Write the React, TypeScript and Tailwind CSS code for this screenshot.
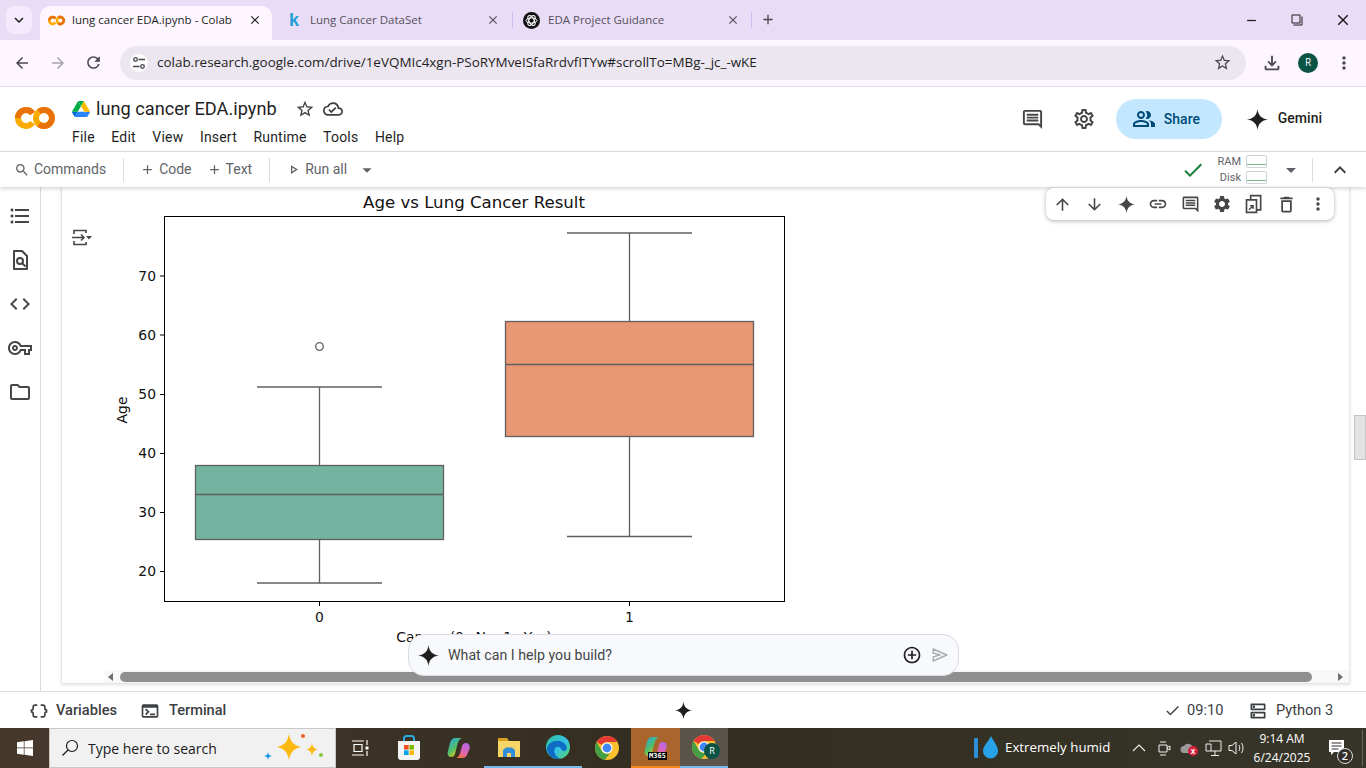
import React from 'react'
import {
  MdAdd, MdAddCircleOutline, MdArrowBack, MdArrowDownward, MdArrowDropDown, MdArrowForward, MdArrowUpward,
  MdCheck, MdClose, MdCode, MdDataObject, MdDeleteOutline, MdExpandLess, MdFilterNone, MdFormatListBulleted,
  MdKeyboardArrowDown, MdLink, MdMoreVert, MdOutlineCloudDone, MdOutlineDns, MdOutlineFileDownload, MdOutlineFolder,
  MdOutlinePeopleAlt, MdOutlinePlayArrow, MdOutlineSettings, MdOutlineTerminal, MdOutlineVpnKey, MdRefresh,
  MdRemove, MdSearch, MdSettings, MdStarBorder,
} from 'react-icons/md'

const SPARK = 'M12 1C12.7 7.6 16.4 11.3 23 12 16.4 12.7 12.7 16.4 12 23 11.3 16.4 7.6 12.7 1 12 7.6 11.3 11.3 7.6 12 1Z'

const MENU = ['File', 'Edit', 'View', 'Insert', 'Runtime', 'Tools', 'Help']

const Spark: React.FC<{ size: number; fill?: string }> = ({ size, fill = '#1f1f1f' }) => (
  <svg width={size} height={size} viewBox="0 0 24 24"><path d={SPARK} fill={fill} /></svg>
)

const CommentIcon: React.FC<{ size: number }> = ({ size }) => (
  <svg width={size} height={size} viewBox="0 0 24 24" fill="currentColor">
    <path d="M20 17.17 18.83 16H4V4h16v13.17zM20 2H4c-1.1 0-2 .9-2 2v12c0 1.1.9 2 2 2h14l4 4V4c0-1.1-.9-2-2-2z" />
    <path d="M6 12h12v2H6zM6 9h12v2H6zM6 6h12v2H6z" />
  </svg>
)

const ColabLogo: React.FC<{ w: number; h: number }> = ({ w, h }) => (
  <svg width={w} height={h} viewBox="0 0 40 24" fill="none" strokeWidth="6">
    <path d="M17.550 7.400A8 8 0 1 0 17.550 16.600" stroke="#f9ab00" />
    <path d="M17.550 7.400A8 8 0 0 0 3 12" stroke="#e8710a" />
    <circle cx="29" cy="12" r="8" stroke="#f9ab00" />
    <path d="M24 5.700A8 8 0 1 1 24 18.300" stroke="#e8710a" />
  </svg>
)

const DriveLogo = () => (
  <svg width="18" height="16" viewBox="0 0 87.3 78">
    <path d="m6.6 66.85 3.85 6.65c.8 1.4 1.95 2.5 3.3 3.3l13.75-23.8h-27.5c0 1.55.4 3.1 1.2 4.5z" fill="#0066da" />
    <path d="m43.65 25-13.75-23.8c-1.35.8-2.5 1.9-3.3 3.3l-25.4 44a9.06 9.06 0 0 0 -1.2 4.5h27.5z" fill="#00ac47" />
    <path d="m73.55 76.8c1.35-.8 2.5-1.9 3.3-3.3l1.6-2.75 7.65-13.25c.8-1.4 1.2-2.95 1.2-4.5h-27.502l5.852 11.5z" fill="#2684fc" />
    <path d="m43.65 25 13.75-23.8c-1.35-.8-2.9-1.2-4.5-1.2h-18.5c-1.6 0-3.15.45-4.5 1.2z" fill="#00ac47" />
    <path d="m59.8 53h-32.3l-13.75 23.8c1.35.8 2.9 1.2 4.5 1.2h50.8c1.6 0 3.15-.45 4.5-1.2z" fill="#2684fc" />
    <path d="m73.4 26.5-12.7-22c-.8-1.4-1.95-2.5-3.3-3.3l-13.75 23.8 16.15 28h27.45c0-1.55-.4-3.1-1.2-4.5z" fill="#ffba00" />
  </svg>
)

const GptIcon = () => (
  <svg width="17" height="17" viewBox="0 0 17 17" fill="none">
    <circle cx="8.5" cy="8.5" r="8.5" fill="#111" />
    <g stroke="#fff" strokeWidth="1">
      <ellipse cx="8.5" cy="8.5" rx="5.5" ry="2.6" />
      <ellipse cx="8.5" cy="8.5" rx="5.5" ry="2.6" transform="rotate(60 8.5 8.5)" />
      <ellipse cx="8.5" cy="8.5" rx="5.5" ry="2.6" transform="rotate(120 8.5 8.5)" />
    </g>
  </svg>
)

const ChromeIcon: React.FC<{ size: number }> = ({ size }) => (
  <svg width={size} height={size} viewBox="0 0 24 24">
    <circle cx="12" cy="12" r="12" fill="#fbc02d" />
    <path d="M12 0A12 12 0 0 1 22.4 6H12a6 6 0 0 0-5.2 3L1.6 6A12 12 0 0 1 12 0Z" fill="#e53935" />
    <path d="M1.6 6 6.8 15A6 6 0 0 0 15 17.2L9.8 23.8A12 12 0 0 1 1.6 6Z" fill="#43a047" />
    <circle cx="12" cy="12" r="5.6" fill="#fff" />
    <circle cx="12" cy="12" r="4.4" fill="#4285f4" />
  </svg>
)

const EdgeIcon = () => (
  <svg width="24" height="24" viewBox="0 0 24 24">
    <defs>
      <linearGradient id="edgeA" x1="0" y1="0" x2="1" y2="1">
        <stop offset="0" stopColor="#2cc3a0" />
        <stop offset="0.55" stopColor="#35c1e6" />
        <stop offset="1" stopColor="#5ad65c" />
      </linearGradient>
    </defs>
    <circle cx="12" cy="12" r="12" fill="url(#edgeA)" />
    <path d="M1 14C2 6 13 3 19 9c3 3 2 7-1 7-3 0-2-3-5-4-4-1-6 3-4 7 1 2 3 4 6 4.600C8 25 2 21 1 14Z" fill="#0f6cc4" />
  </svg>
)

const CopilotIcon: React.FC<{ size: number; id: string }> = ({ size, id }) => (
  <svg width={size} height={size} viewBox="0 0 24 24">
    <defs>
      <linearGradient id={`${id}a`} x1="0" y1="0" x2="0.6" y2="1">
        <stop offset="0" stopColor="#2aa7e8" />
        <stop offset="0.6" stopColor="#4fbf67" />
        <stop offset="1" stopColor="#f2c21b" />
      </linearGradient>
      <linearGradient id={`${id}b`} x1="0.7" y1="0" x2="0.3" y2="1">
        <stop offset="0" stopColor="#b866e8" />
        <stop offset="0.6" stopColor="#e066b0" />
        <stop offset="1" stopColor="#f0743c" />
      </linearGradient>
    </defs>
    <path d="M8 2h7c-3 1-4 4-5 8l-2 8c-.5 2-2 3-4 3-3 0-4-3-3-6l2-8C4 4 5.500 2 8 2Z" fill={`url(#${id}a)`} />
    <path d="M16 22H9c3-1 4-4 5-8l1-4c.5-2 2-3 4-3 3 0 4.500 3 3.500 6l-2.500 6c-.8 2-2.500 3-4.500 3Z" fill={`url(#${id}b)`} />
  </svg>
)

const StoreIcon = () => (
  <svg width="24" height="26" viewBox="0 0 24 26">
    <path d="M7 6V3.500C7 2 8 1 9.500 1h5C16 1 17 2 17 3.500V6" fill="none" stroke="#29a9e0" strokeWidth="2" />
    <path d="M1 6h22v16c0 2-1 3-3 3H4c-2 0-3-1-3-3Z" fill="#f4f4f4" />
    <rect x="7" y="10" width="4.600" height="4.600" fill="#f25022" />
    <rect x="12.400" y="10" width="4.600" height="4.600" fill="#7fba00" />
    <rect x="7" y="15.400" width="4.600" height="4.600" fill="#00a4ef" />
    <rect x="12.400" y="15.400" width="4.600" height="4.600" fill="#ffb900" />
  </svg>
)

const ExplorerIcon = () => (
  <svg width="24" height="24" viewBox="0 0 24 24">
    <path d="M1 3h9l2 3H1Z" fill="#d99e1f" />
    <path d="M1 6h22v16H1Z" fill="#f8d568" />
    <path d="M6 22v-7l3-2.500h6l3 2.500v7h-4v-4h-4v4Z" fill="#2f8fd8" />
  </svg>
)

const Sparkles = () => (
  <svg width="62" height="32" viewBox="0 0 62 32">
    <path d="M26 2c1.500 8 5 11.500 12 13-7 1.500-10.500 5-12 13-1.500-8-5-11.500-12-13 7-1.500 10.500-5 12-13Z" fill="#fdb913" />
    <path d="M49 11c.6 4 2.400 5.800 6 6.500-3.600.7-5.400 2.500-6 6.500-.6-4-2.400-5.800-6-6.500 3.600-.7 5.400-2.500 6-6.500Z" fill="#fdb913" />
    <path d="M5 20c.4 2.600 1.400 3.600 4 4-2.600.4-3.600 1.400-4 4-.4-2.600-1.400-3.600-4-4 2.600-.4 3.600-1.400 4-4Z" fill="#1e9be8" />
    <circle cx="40" cy="4" r="2" fill="#e8622a" />
    <circle cx="58" cy="23" r="2" fill="#8cc63f" />
  </svg>
)

// matplotlib figure, coordinates are screen pixels
const BoxPlot = () => {
  const line = '#5f5f5f'
  const ticks = [
    ['70', 276], ['60', 335], ['50', 394.5], ['40', 453.5], ['30', 512.5], ['20', 571.5],
  ] as const
  return (
    <svg width="700" height="484" viewBox="100 187 700 484" className="block shrink-0 font-['DejaVu_Sans',sans-serif]">
      <text x="474" y="207.500" textAnchor="middle" fontSize="16.600" fill="#111">Age vs Lung Cancer Result</text>
      <rect x="164.500" y="216.500" width="620" height="385" fill="#fff" stroke="#000" strokeWidth="1" />
      {ticks.map(([label, y]) => (
        <g key={label}>
          <line x1="160" x2="164" y1={y} y2={y} stroke="#000" />
          <text x="156" y={y + 4.800} textAnchor="end" fontSize="13.900" fill="#111">{label}</text>
        </g>
      ))}
      <text transform="translate(127 410) rotate(-90)" textAnchor="middle" fontSize="13.900" fill="#111">Age</text>

      <line x1="319.500" x2="319.500" y1="602" y2="606" stroke="#000" />
      <line x1="629.500" x2="629.500" y1="602" y2="606" stroke="#000" />
      <text x="319.500" y="622" textAnchor="middle" fontSize="13.900" fill="#111">0</text>
      <text x="629.500" y="622" textAnchor="middle" fontSize="13.900" fill="#111">1</text>
      <text x="474" y="642" textAnchor="middle" fontSize="13.900" fill="#111">Cancer (0=No, 1=Yes)</text>

      <g stroke={line} strokeWidth="1.300" fill="none">
        <line x1="319.500" x2="319.500" y1="387" y2="466" />
        <line x1="319.500" x2="319.500" y1="539.500" y2="583" />
        <line x1="257" x2="382" y1="387" y2="387" />
        <line x1="257" x2="382" y1="583" y2="583" />
        <rect x="195.500" y="465.500" width="248" height="74" fill="#73b3a0" />
        <line x1="195.500" x2="443.500" y1="494.500" y2="494.500" />
        <circle cx="319.500" cy="346.500" r="3.800" />

        <line x1="629.500" x2="629.500" y1="233" y2="321.500" />
        <line x1="629.500" x2="629.500" y1="436.500" y2="536.500" />
        <line x1="567" x2="692" y1="233" y2="233" />
        <line x1="567" x2="692" y1="536.500" y2="536.500" />
        <rect x="505.500" y="321.500" width="248" height="115" fill="#e99673" />
        <line x1="505.500" x2="753.500" y1="364.500" y2="364.500" />
      </g>
    </svg>
  )
}

const TabStrip = () => (
  <div className="flex h-[40px] shrink-0 items-end bg-[#e9dcf6] pl-[6px] text-[11.500px] text-[#3c3a41]">
    <div className="mb-[6px] flex h-[28px] w-[26px] items-center justify-center rounded-lg bg-[#f3eafb]">
      <MdKeyboardArrowDown size={18} color="#1f1f1f" />
    </div>
    <div className="ml-[8px] flex h-[34px] w-[232px] items-center rounded-t-[10px] bg-[#fdf6fe] pb-[6px] pl-[8px] text-[#1f1f1f]">
      <ColabLogo w={17} h={11} />
      <span className="ml-[7px] w-[160px] whitespace-nowrap">lung cancer EDA.ipynb - Colab</span>
      <MdClose size={14} className="ml-[16px]" />
    </div>
    <div className="flex h-[34px] w-[240px] items-center pb-[6px]">
      <span className="ml-[17px] w-[10px] font-['Liberation_Sans',sans-serif] text-[18px] leading-none font-bold text-[#1f9fd4]">k</span>
      <span className="ml-[11px] w-[176px] whitespace-nowrap text-[#55505c]">Lung Cancer DataSet</span>
      <MdClose size={14} className="text-[#55505c]" />
    </div>
    <div className="mb-[12px] h-[16px] w-px bg-[#cdbdf0]" />
    <div className="flex h-[34px] w-[238px] items-center pb-[6px]">
      <span className="ml-[10px] flex"><GptIcon /></span>
      <span className="ml-[8px] w-[178px] whitespace-nowrap text-[#55505c]">EDA Project Guidance</span>
      <MdClose size={14} className="text-[#55505c]" />
    </div>
    <div className="mb-[12px] h-[16px] w-px bg-[#cdbdf0]" />
    <div className="mb-[12px] ml-[8px] flex h-[18px] w-[16px] items-center justify-center text-[#4a4650]">
      <MdAdd size={17} />
    </div>
    <div className="ml-auto mb-[12px] flex h-[16px] items-center text-[#1f1f1f]">
      <MdRemove size={15} />
      <MdFilterNone size={12} className="ml-[32px] -scale-x-100" />
      <MdClose size={18} className="ml-[31px] mr-[14px]" />
    </div>
  </div>
)

const AddressBar = () => (
  <div className="flex h-[47px] shrink-0 items-center border-b border-[#e7dfec] bg-[#fdf6fe] pb-px text-[#4a4650]">
    <MdArrowBack size={18} className="ml-[13px]" />
    <MdArrowForward size={18} className="ml-[18px] text-[#a8a4ad]" />
    <MdRefresh size={19} className="ml-[17px]" />
    <div className="ml-[17px] flex h-[34px] w-[1126px] items-center rounded-full bg-[#ece6f0]">
      <span className="ml-[10px] flex h-[18px] w-[18px] items-center justify-center rounded-full bg-white">
        <svg width="14" height="14" viewBox="0 0 14 14" fill="none" stroke="currentColor" strokeWidth="1.300">
          <circle cx="3.500" cy="3.500" r="1.800" />
          <path d="M6.500 3.500H13M1 10.500h6.500" />
          <circle cx="10.500" cy="10.500" r="1.800" />
        </svg>
      </span>
      <span className="ml-[9px] whitespace-nowrap text-[13.450px] text-[#1f1f1f]">colab.research.google.com/drive/1eVQMIc4xgn-PSoRYMveISfaRrdvfITYw#scrollTo=MBg-_jc_-wKE</span>
      <MdStarBorder size={19} className="ml-auto mr-[14px]" />
    </div>
    <MdOutlineFileDownload size={22} className="ml-[15px]" />
    <span className="ml-[15px] flex h-[20px] w-[20px] items-center justify-center rounded-full bg-[#0b5345] text-[10px] text-white">R</span>
    <MdMoreVert size={20} className="ml-[16px]" />
  </div>
)

const ColabHeader = () => (
  <div className="flex h-[65px] shrink-0 border-b border-[#dadce0] bg-white">
    <div className="ml-[15px] mt-[19px]"><ColabLogo w={40} h={24} /></div>
    <div className="ml-[17px] flex flex-col">
      <div className="mt-[12px] flex h-[20px] items-center">
        <DriveLogo />
        <span className="ml-[6px] text-[18.200px] leading-none text-[#1f1f1f]">lung cancer EDA.ipynb</span>
        <MdStarBorder size={20} className="ml-[18px] text-[#3c4043]" />
        <MdOutlineCloudDone size={20} className="ml-[8px] text-[#3c4043]" />
      </div>
      <div className="mt-[8px] flex gap-[16.500px] text-[14px] leading-[20px] text-[#1f1f1f]">
        {MENU.map((m) => <span key={m} className="tracking-[0.2px]">{m}</span>)}
      </div>
    </div>
    <div className="ml-auto mt-[12px] flex h-[40px] items-center">
      <span className="text-[#444746]"><CommentIcon size={23} /></span>
      <MdOutlineSettings size={24} className="ml-[28px] text-[#444746]" />
      <div className="ml-[20px] flex h-[40px] w-[106px] items-center rounded-[20px] bg-[#c2e7ff] pl-[16px] text-[#004a77]">
        <MdOutlinePeopleAlt size={24} />
        <span className="ml-[8px] text-[14px] font-medium">Share</span>
      </div>
      <span className="ml-[24px] flex"><Spark size={23} /></span>
      <span className="ml-[9px] mr-[44px] mb-[2px] text-[14px] font-medium text-[#1f1f1f]">Gemini</span>
    </div>
  </div>
)

const NotebookToolbar = () => (
  <div className="relative z-10 flex h-[35px] shrink-0 items-center bg-white text-[14px] text-[#5f6368] shadow-[0_2px_4px_rgba(60,64,67,0.2)]">
    <MdSearch size={16} className="ml-[14px]" />
    <span className="ml-[4px]">Commands</span>
    <div className="ml-[17px] h-[24px] w-px bg-[#dadce0]" />
    <MdAdd size={15} className="ml-[16px]" />
    <span className="ml-[4px]">Code</span>
    <MdAdd size={15} className="ml-[15px]" />
    <span className="ml-[4px]">Text</span>
    <div className="ml-[17px] h-[24px] w-px bg-[#dadce0]" />
    <MdOutlinePlayArrow size={15} className="ml-[16px]" />
    <span className="ml-[4px]">Run all</span>
    <MdArrowDropDown size={22} className="ml-[9px]" />
    <div className="ml-auto flex items-center">
      <MdCheck size={24} className="text-[#188038]" />
      <div className="ml-[12px] grid grid-cols-[auto_21px] items-center gap-x-[5px] gap-y-[3px] text-right text-[11px] leading-[13px]">
        <span>RAM</span>
        <span className="flex h-[13px] items-end rounded-[2px] border border-[#cfd2d6] pb-[2px]"><span className="h-px w-full bg-[#7dbb8c]" /></span>
        <span>Disk</span>
        <span className="flex h-[13px] items-end rounded-[2px] border border-[#cfd2d6] pb-[2px]"><span className="h-px w-full bg-[#7dbb8c]" /></span>
      </div>
      <MdArrowDropDown size={24} className="ml-[12px]" />
      <div className="ml-[9px] h-[24px] w-px bg-[#dadce0]" />
      <MdExpandLess size={24} className="ml-[15px] mr-[14px] text-[#3c4043]" />
    </div>
  </div>
)

const LeftRail = () => (
  <div className="flex w-[41px] shrink-0 flex-col items-center gap-[20px] border-r border-[#dadce0] pt-[17px] pr-px text-[#444746]">
    <MdFormatListBulleted size={24} />
    <svg width="24" height="24" viewBox="0 0 24 24" fill="none" stroke="currentColor" strokeWidth="2">
      <path d="M6 3h8l5 5v13H6Z" strokeLinejoin="round" />
      <circle cx="12" cy="13" r="3" />
      <path d="m14.500 15.500 3 3" />
    </svg>
    <MdCode size={24} />
    <MdOutlineVpnKey size={24} />
    <MdOutlineFolder size={24} />
  </div>
)

const CellToolbar = () => (
  <div className="absolute top-px right-[32px] z-20 flex h-[32px] w-[288px] items-center rounded-lg bg-white text-[#444746] shadow-[0_1px_4px_rgba(60,64,67,0.4)] [&>*]:flex [&>*]:w-[32px] [&>*]:justify-center">
    <span><MdArrowUpward size={19} /></span>
    <span><MdArrowDownward size={19} /></span>
    <span><Spark size={19} fill="#444746" /></span>
    <span><MdLink size={20} /></span>
    <span><CommentIcon size={19} /></span>
    <span><MdSettings size={20} /></span>
    <span>
      <svg width="20" height="20" viewBox="0 0 24 24" fill="none" stroke="currentColor" strokeWidth="2">
        <path d="M8 6V2h12v17h-5M3 7h12v15H3Z" />
        <path d="m6 19 5-5M7 14h4v4" strokeWidth="1.600" />
      </svg>
    </span>
    <span><MdDeleteOutline size={21} /></span>
    <span><MdMoreVert size={20} /></span>
  </div>
)

const GeminiPrompt = () => (
  <div className="absolute top-[447px] left-[408px] z-20 flex h-[42px] w-[551px] items-center rounded-2xl border border-[#dadce0] bg-[#f8f9fd] pl-[8px] text-[14.200px] text-[#444746]">
    <Spark size={23} />
    <span className="ml-[8px] pt-px">What can I help you build?</span>
    <MdAddCircleOutline size={20} className="ml-auto text-[#1f1f1f]" />
    <svg width="18" height="18" viewBox="0 0 24 24" fill="none" stroke="#a8abb0" strokeWidth="2" className="ml-[9px] mr-[9px]">
      <path d="M3 4 21 12 3 20V14.500L12 12 3 9.500Z" strokeLinejoin="round" />
    </svg>
  </div>
)

const MainArea = () => (
  <div className="relative flex h-[504px] shrink-0 bg-white">
    <LeftRail />
    <div className="flex flex-1 pl-[20px]">
      <div className="mb-[7px] flex flex-1 flex-col overflow-hidden border-x border-b border-[#e6e6e6] shadow-[0_1px_3px_rgba(60,64,67,0.15)]">
        <div className="flex min-h-0 flex-1">
          <div className="w-[38px] shrink-0 pt-[41px] pl-[9px] text-[#444746]">
            <svg width="22" height="20" viewBox="0 0 22 20" fill="none" stroke="currentColor" strokeWidth="1.600">
              <path d="M3 6V2.500h12V5M3 13v3.500h12V14" />
              <path d="M1 9.500h12M10 6.500l3 3-3 3" />
              <path d="M15 8h6l-3 3.500Z" fill="currentColor" stroke="none" />
            </svg>
          </div>
          <BoxPlot />
        </div>
        <div className="flex h-[13px] shrink-0 items-center bg-white">
          <div className="ml-[43px] flex h-[13px] flex-1 items-center bg-[#f8f8f8]">
            <span className="ml-[3px] h-0 w-0 border-y-[4px] border-r-[5px] border-y-transparent border-r-[#6e6e6e]" />
            <div className="ml-[7px] h-[10px] w-[1192px] rounded-full bg-[#8f8f8f]" />
            <span className="ml-auto mr-[6px] h-0 w-0 border-y-[4px] border-l-[5px] border-y-transparent border-l-[#6e6e6e]" />
          </div>
        </div>
      </div>
      <div className="w-[16px] shrink-0 pt-[228px] pl-[4px]">
        <div className="h-[45px] w-[12px] border border-[#c4c4c4] bg-[#e3e3e3]" />
      </div>
    </div>
    <CellToolbar />
    <GeminiPrompt />
  </div>
)

const StatusBar = () => (
  <div className="flex h-[37px] shrink-0 items-center border-t border-[#dadce0] bg-white pt-px text-[14.600px] text-[#3c4043]">
    <MdDataObject size={20} className="ml-[29px] shrink-0" />
    <span className="ml-[7px] w-[61px] shrink-0 font-medium whitespace-nowrap">Variables</span>
    <MdOutlineTerminal size={20} className="ml-[23px] shrink-0" />
    <span className="ml-[9px] w-[56px] shrink-0 font-medium whitespace-nowrap">Terminal</span>
    <span className="ml-[449px] flex"><Spark size={19} /></span>
    <MdCheck size={17} className="ml-[471px] shrink-0" />
    <span className="ml-[6px] w-[36px] shrink-0">09:10</span>
    <MdOutlineDns size={20} className="ml-[25px] shrink-0" />
    <span className="ml-[8px] whitespace-nowrap">Python 3</span>
  </div>
)

const Taskbar = () => (
  <div className="flex h-[40px] shrink-0 items-stretch bg-gradient-to-r from-[#47382c] via-[#322d20] to-[#37352a] font-['Open_Sans',sans-serif] text-white [&>*]:shrink-0">
    <div className="flex w-[49px] items-center justify-center">
      <svg width="16" height="16" viewBox="0 0 16 16" fill="#fff">
        <path d="M0 2.300 6.800 1.300V7.500H0ZM7.500 1.200 16 0V7.500H7.500ZM0 8.300H6.800V14.700L0 13.700ZM7.500 8.300H16V16L7.500 14.800Z" />
      </svg>
    </div>
    <div className="flex w-[287px] items-center border border-[#c8c8c8] bg-[#f1f1f1] pl-[11px] text-[#1a1a1a]">
      <svg width="18" height="18" viewBox="0 0 18 18" fill="none" stroke="#1a1a1a" strokeWidth="1.200">
        <circle cx="11" cy="7" r="5.500" />
        <path d="M7 11 1.500 16.500" />
      </svg>
      <span className="ml-[9px] text-[14px]">Type here to search</span>
      <span className="ml-auto mr-[10px] flex"><Sparkles /></span>
    </div>
    <div className="flex w-[48px] items-center justify-center">
      <svg width="18" height="18" viewBox="0 0 18 18" fill="none" stroke="#fff" strokeWidth="1.200">
        <path d="M1 2h12M1 16h12M3 5.500h8v7H3ZM16 1v5M16 12v5" />
        <rect x="14.500" y="7.500" width="3" height="3" fill="#fff" stroke="none" />
      </svg>
    </div>
    <div className="flex w-[50px] items-center justify-center"><StoreIcon /></div>
    <div className="flex w-[50px] items-center justify-center"><CopilotIcon size={24} id="cp" /></div>
    <div className="flex w-[49px] items-center justify-center border-b-2 border-[#76b9ed]"><ExplorerIcon /></div>
    <div className="flex w-[49px] items-center justify-center border-b-2 border-[#76b9ed]"><EdgeIcon /></div>
    <div className="flex w-[49px] items-center justify-center"><ChromeIcon size={24} /></div>
    <div className="relative flex w-[49px] items-center justify-center border-b-2 border-[#f7861c] bg-[#a9652c]">
      <CopilotIcon size={24} id="m3" />
      <span className="absolute top-[24px] left-[17px] bg-black px-px font-['DejaVu_Sans_Mono',monospace] text-[7px] leading-[8px] font-bold text-white">M365</span>
    </div>
    <div className="relative flex w-[48px] items-center justify-center border-b-2 border-[#76b9ed] bg-[#5a544a]">
      <ChromeIcon size={24} />
      <span className="absolute top-[15px] left-[24px] flex h-[16px] w-[16px] items-center justify-center rounded-full bg-[#0b5345] text-[9px]">R</span>
    </div>
    <div className="ml-[246px] flex w-[135px] items-center">
      <svg width="26" height="26" viewBox="0 0 26 26" className="shrink-0">
        <rect x="0" y="3" width="4" height="20" fill="#2c8fd8" />
        <path d="M17 1c3 6 7 10 7 15a7.500 7.500 0 0 1-15 0c0-5 5-9 8-15Z" fill="#27a2e8" />
      </svg>
      <span className="ml-[5px] text-[13.300px] whitespace-nowrap">Extremely humid</span>
    </div>
    <div className="ml-[23px] flex items-center text-[#f0f0f0]">
      <svg width="14" height="14" viewBox="0 0 14 14" fill="none" stroke="currentColor" strokeWidth="1.100"><path d="m1 10 6-6 6 6" /></svg>
      <svg className="ml-[11px]" width="14" height="18" viewBox="0 0 14 18" fill="none" stroke="currentColor">
        <path d="M2 6h8v7H2ZM10 8.500 13 7v4l-3-1.500M3 3h6M3 16h6" />
      </svg>
      <span className="relative ml-[9px] flex w-[16px]">
        <svg width="16" height="12" viewBox="0 0 16 12"><path d="M4 11a3.500 3.500 0 0 1 0-7 5 5 0 0 1 9 2 2.500 2.500 0 0 1 0 5Z" fill="#9a9a9a" /></svg>
        <span className="absolute top-[4px] left-[8px] flex h-[10px] w-[10px] items-center justify-center rounded-full bg-[#d81e3a] text-[8px] leading-none font-bold">x</span>
      </span>
      <svg className="ml-[9px]" width="17" height="17" viewBox="0 0 17 17" fill="none" stroke="currentColor">
        <path d="M4 1h12v10H6M1 4h5v7H1ZM10 11v4M6 15.500h8" />
      </svg>
      <svg className="ml-[6px]" width="18" height="16" viewBox="0 0 18 16" fill="none" stroke="currentColor">
        <path d="M1 5.500h3L8 2v12L4 10.500H1ZM11 5c1 2 1 4 0 6M13.500 3c2 3 2 7 0 10" />
      </svg>
    </div>
    <div className="ml-[3px] flex w-[66px] flex-col items-center justify-center text-[12px] leading-[19px]">
      <span>9:14 AM</span>
      <span>6/24/2025</span>
    </div>
    <div className="relative ml-[6px] flex w-[30px] items-center justify-center">
      <svg width="17" height="16" viewBox="0 0 17 16" fill="#fff">
        <path d="M1 0h15v12H6l-3 3v-3H1Z" />
        <path d="M3.500 3h10M3.500 6h10M3.500 9h7" stroke="#333" />
      </svg>
      <span className="absolute top-[20px] left-[16px] flex h-[16px] w-[16px] items-center justify-center rounded-full border border-[#ddd] bg-[#33302a] text-[11px] font-semibold">2</span>
    </div>
    <div className="ml-auto mr-[3px] my-[2px] w-px bg-[#6a675f]" />
  </div>
)

export default function App() {
  return (
    <div className="flex h-[768px] w-[1366px] flex-col overflow-hidden bg-white font-[Roboto,sans-serif]">
      <div className="font-['Open_Sans',sans-serif]">
        <TabStrip />
        <AddressBar />
      </div>
      <ColabHeader />
      <NotebookToolbar />
      <MainArea />
      <StatusBar />
      <Taskbar />
    </div>
  )
}
